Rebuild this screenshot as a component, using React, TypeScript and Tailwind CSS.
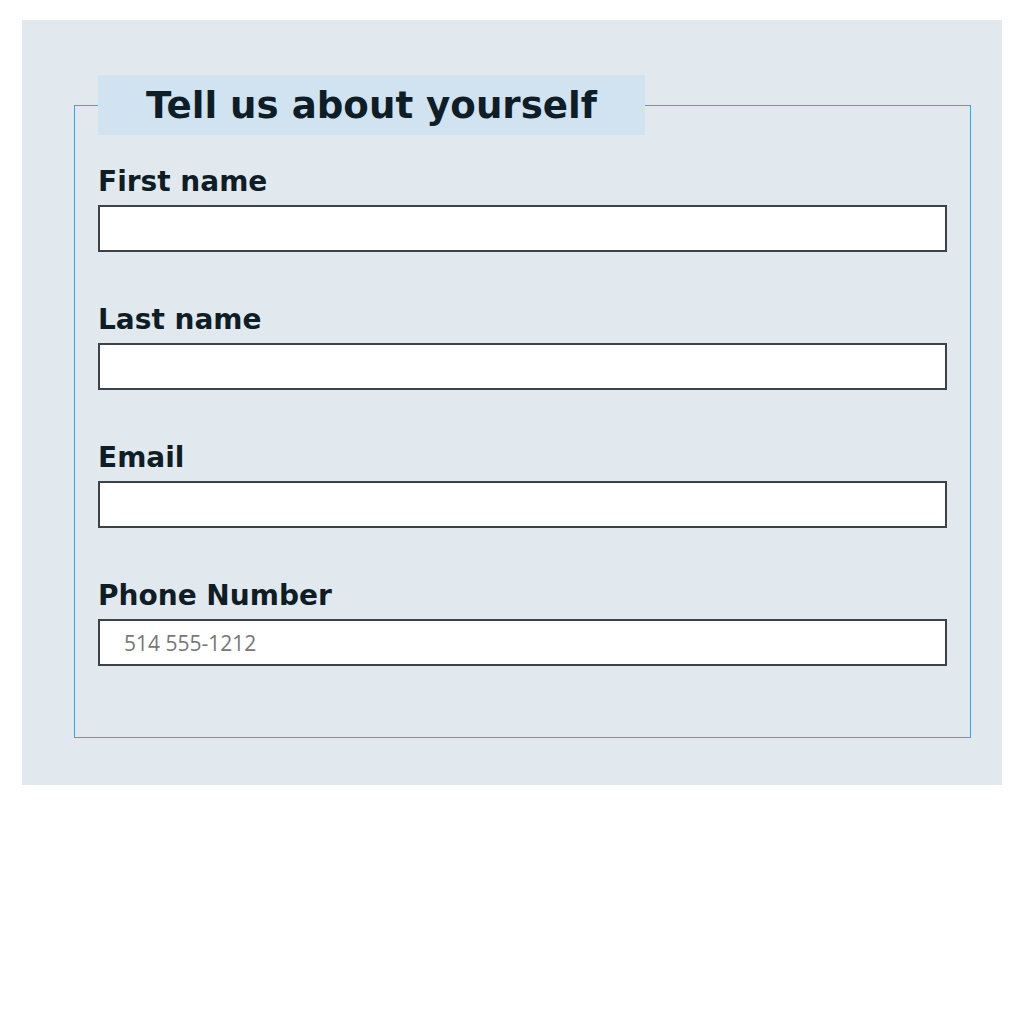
const FIELDS = [
  { label: "First name", placeholder: "" },
  { label: "Last name", placeholder: "" },
  { label: "Email", placeholder: "" },
  { label: "Phone Number", placeholder: "514 555-1212" },
];

export default function App() {
  return (
    <div className="min-h-screen bg-white pl-[22px] pr-[22px] pt-[20px]">
      <div className="bg-[#e2e9ee] pb-[47px] pl-[52px] pr-[31px] pt-[55px]">
        <fieldset className="border border-solid border-[#2aaae6] pb-[71px] pl-[23px] pr-[23px]">
          <legend className="bg-[#d1e3f1] px-[48px] font-['DejaVu_Sans',sans-serif] text-[37.2px] font-bold leading-[60px] text-[#0f1d27]">
            Tell us about yourself
          </legend>
          <div className="mt-[31px] flex flex-col gap-[52px]">
            {FIELDS.map((f) => (
              <label key={f.label} className="flex flex-col gap-[7px]">
                <span className="font-['DejaVu_Sans',sans-serif] text-[28px] font-bold leading-[32px] text-[#0f1d27]">
                  {f.label}
                </span>
                <input
                  type="text"
                  placeholder={f.placeholder}
                  className="h-[47px] w-full border-2 border-solid border-[#3b4347] bg-white px-[24px] font-['Open_Sans',sans-serif] text-[21px] text-[#222] outline-none placeholder:text-[#777]"
                />
              </label>
            ))}
          </div>
        </fieldset>
      </div>
    </div>
  );
}
